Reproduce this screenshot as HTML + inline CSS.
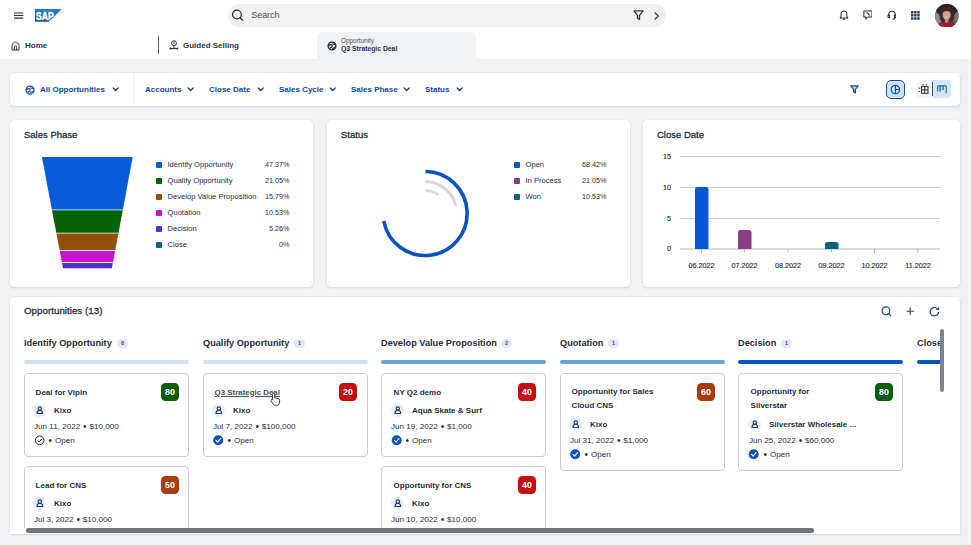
<!DOCTYPE html>
<html lang="en">
<head>
<meta charset="utf-8">
<title>Opportunities</title>
<style>
*{box-sizing:border-box;margin:0;padding:0}
html,body{width:971px;height:545px;overflow:hidden}
body{background:#f0f2f4;font-family:"Liberation Sans",sans-serif;color:#1d2d3e;position:relative}
.abs{position:absolute}
.t{position:absolute;white-space:nowrap;line-height:1}
#topbar{left:0;top:0;width:971px;height:59px;background:#fff}
#search{left:228px;top:4.200px;width:438px;height:22.500px;border-radius:11px;background:#eff1f3}
#tab{left:317px;top:32px;width:158.500px;height:27px;background:#f0f2f4;border-radius:5px 5px 0 0}
.card{position:absolute;background:#fff;border-radius:4.500px;box-shadow:0 0 1.500px rgba(60,70,90,.10),0 1px 2.500px rgba(60,70,90,.14)}
.b{font-weight:bold}
.flt{font-size:8px;font-weight:bold;color:#0e4a96;top:85.5px}
.leg{font-size:7.6px;color:#1d2d3e;margin-top:1px;margin-left:.5px}
.num{font-size:7.200px;margin-top:1.200px}
.sq{margin-top:.9px;position:absolute;width:6px;height:6px;border-radius:1px}
.col{font-size:9.2px;font-weight:bold;color:#1d2d3e;top:339.200px}
.cnt{position:absolute;top:338.800px;height:9.200px;min-width:11px;border-radius:4.600px;background:#e1e8f3;color:#33507a;font-size:5.5px;font-weight:bold;text-align:center;line-height:9.200px}
.bar{position:absolute;top:360px;height:4px;width:165px;border-radius:2px}
.kc{position:absolute;background:#fff;border:1px solid #c9ccd0;border-radius:4px;width:165px}
.kt{margin-top:.5px;margin-left:-.4px;font-size:8px;font-weight:bold;color:#1d2d3e}
.kn{margin-top:.8px;font-size:8px;font-weight:bold;color:#1d2d3e}
.kd{margin-top:.6px;font-size:8.1px;color:#1d2d3e}
.bl{font-size:10px;line-height:0;position:relative;top:1.500px;margin:0 .6px}
.badge{position:absolute;width:18px;height:18px;border-radius:4.500px;color:#fff;font-size:8.800px;font-weight:bold;text-align:center;line-height:18px}
.av{position:absolute;width:13px;height:13px;border-radius:50%;background:#e8ecf5;margin:.8px 0 0 -.8px}
</style>
</head>
<body>
<div class="abs" style="left:960.500px;top:59px;width:7px;height:486px;background:#edeff1"></div><div class="abs" style="left:967.500px;top:59px;width:3.500px;height:486px;background:#f3f4f6"></div>
<div id="topbar" class="abs"></div>
<div id="search" class="abs"></div>
<div id="tab" class="abs"></div>

<!-- hamburger -->
<svg class="abs" style="left:13.700px;top:12px" width="10" height="8" viewBox="0 0 10 8"><path d="M0 .9h9.300M0 3.500h9.300M0 6.100h9.300" stroke="#2a2f35" stroke-width="1.050" fill="none"/></svg>
<!-- SAP logo -->
<svg class="abs" style="left:35px;top:9px" width="27" height="13" viewBox="0 0 27 13"><defs><linearGradient id="sapg" x1="0" y1="0" x2="0" y2="1"><stop offset="0" stop-color="#1b84c8"/><stop offset="1" stop-color="#0a4a8e"/></linearGradient></defs><path d="M0 0h26.800L13.800 12.800H0z" fill="url(#sapg)"/><text x="1.100" y="10.600" font-family="Liberation Sans, sans-serif" font-weight="bold" font-size="10.100" fill="#fff" stroke="#fff" stroke-width=".5" textLength="17.600" lengthAdjust="spacingAndGlyphs">SAP</text></svg>

<!-- search icon/text -->
<svg class="abs" style="left:231px;top:9.300px" width="13" height="13" viewBox="0 0 13 13"><circle cx="5.900" cy="5.500" r="4.400" stroke="#2b3440" stroke-width="1.250" fill="none"/><path d="M9.100 8.700l2.600 2.600" stroke="#2b3440" stroke-width="1.300" stroke-linecap="round"/></svg>
<div class="t" style="left:251.300px;top:10.800px;font-size:8.900px;color:#464f5c">Search</div>
<svg class="abs" style="left:633px;top:10px" width="11" height="11" viewBox="0 0 11 11"><path d="M1 0.900h9L6.500 5.400v4L4.500 8.200V5.400z" stroke="#2f3843" stroke-width="1.300" fill="none" stroke-linejoin="round"/></svg>
<svg class="abs" style="left:654px;top:11.500px" width="6" height="8" viewBox="0 0 6 8"><path d="M1.200 1l3.100 3L1.200 7" stroke="#3a434e" stroke-width="1.300" fill="none" stroke-linecap="round" stroke-linejoin="round"/></svg>

<!-- right icons -->
<svg class="abs" style="left:838.700px;top:10.300px" width="9.900" height="10.800" viewBox="0 0 11 12"><path d="M5.500 1.200c-2 0-3.200 1.500-3.200 3.300v2.600L1.200 8.800h8.600L8.700 7.100V4.500c0-1.800-1.200-3.300-3.200-3.300zM4.600 10.200h1.800" stroke="#2a2f36" stroke-width="1.150" fill="none" stroke-linejoin="round" stroke-linecap="round"/></svg>
<svg class="abs" style="left:862.600px;top:10.300px" width="9.900" height="9.900" viewBox="0 0 11 11"><path d="M1 1h9v6.800H5.300L3.200 10V7.800H1z" stroke="#2a2f36" stroke-width="1.150" fill="none" stroke-linejoin="round"/><path d="M3.800 2.800l2 1 .6 1.600 1.400.4" stroke="#2a2f36" stroke-width="1.200" fill="none"/></svg>
<svg class="abs" style="left:886.600px;top:10.300px" width="9.900" height="9.900" viewBox="0 0 11 11"><path d="M1.800 6.500V5a3.700 3.700 0 0 1 7.400 0v1.500M1.200 5.600h1.600v2.800H1.200zM8.200 5.600h1.600v2.800H8.200zM9 8.400c0 1.200-1 1.800-2.600 1.800" stroke="#2a2f36" stroke-width="1.150" fill="none" stroke-linejoin="round"/></svg>
<svg class="abs" style="left:911.400px;top:11px" width="9" height="9" viewBox="0 0 9 9" fill="#2b425c"><rect x="0" y="0" width="2.500" height="2.500" rx=".3"/><rect x="3.100" y="0" width="2.500" height="2.500" rx=".3"/><rect x="6.200" y="0" width="2.500" height="2.500" rx=".3"/><rect x="0" y="3.100" width="2.500" height="2.500" rx=".3"/><rect x="3.100" y="3.100" width="2.500" height="2.500" rx=".3"/><rect x="6.200" y="3.100" width="2.500" height="2.500" rx=".3"/><rect x="0" y="6.200" width="2.500" height="2.500" rx=".3"/><rect x="3.100" y="6.200" width="2.500" height="2.500" rx=".3"/><rect x="6.200" y="6.200" width="2.500" height="2.500" rx=".3"/></svg>
<!-- avatar -->
<svg class="abs" style="left:935px;top:3.700px" width="23.700" height="23.700" viewBox="0 0 24 24"><defs><clipPath id="avc"><circle cx="12" cy="12" r="12"/></clipPath></defs><g clip-path="url(#avc)"><rect width="24" height="24" fill="#5b5751"/><ellipse cx="2.500" cy="14.500" rx="4.500" ry="5.500" fill="#8d8f86"/><ellipse cx="22" cy="12.500" rx="3.500" ry="5" fill="#767870"/><ellipse cx="12" cy="5" rx="11" ry="7.500" fill="#2d2120"/><ellipse cx="12" cy="11.500" rx="7.600" ry="8.800" fill="#3d2826"/><path d="M2.500 24c.4-4.500 3.800-6.300 9.300-6.300s9.300 1.800 9.700 6.300z" fill="#9c1c2b"/><path d="M9.800 15h4l-.3 3.200c-1.100.9-2.300.9-3.400 0z" fill="#c08e78"/><ellipse cx="11.800" cy="10.800" rx="4.100" ry="5.200" fill="#d2a28b"/><path d="M9.900 12.500c1.200 1 2.600 1 3.800 0-.5 1.600-3.300 1.600-3.800 0z" fill="#f5ecea"/><path d="M7.500 9.500c.3-3 2-4.600 4.300-4.600s4 1.600 4.300 4.600c-1.300-1.700-2.600-2.400-4.300-2.400s-3 .7-4.300 2.400z" fill="#3d2826"/></g></svg>

<!-- tabs row -->
<svg class="abs" style="left:10.600px;top:40.600px" width="9" height="10" viewBox="0 0 9 10"><path d="M1 9V4.300C1 2.800 3.300 1 4.500 1S8 2.800 8 4.300V9z" stroke="#2a2f35" stroke-width="1" fill="none" stroke-linejoin="round"/><path d="M3.300 9V6.200a1.200 1.200 0 0 1 2.400 0V9" stroke="#2a2f35" stroke-width="1" fill="none"/></svg>
<div class="t b" style="left:25px;top:41.8px;font-size:8px;color:#2d3640">Home</div>
<div class="abs" style="left:158px;top:36px;width:1px;height:18px;background:#59616b"></div>
<svg class="abs" style="left:168.500px;top:40px" width="10" height="10" viewBox="0 0 10 10"><circle cx="5" cy="3.200" r="2.400" stroke="#2a2f35" stroke-width="1" fill="none"/><path d="M5 2v2.400M5 5.600v2.600" stroke="#2a2f35" stroke-width=".9" fill="none"/><path d="M1 8.500h8" stroke="#2a2f35" stroke-width="1.200"/><circle cx="1.200" cy="8.500" r=".9" fill="#2a2f35"/><path d="M8 7.300l1.700 1.200L8 9.700z" fill="#2a2f35"/></svg>
<div class="t b" style="left:183px;top:41.8px;font-size:8px;color:#2d3640">Guided Selling</div>
<svg class="abs" style="left:326.500px;top:40.500px" width="10" height="10" viewBox="0 0 10 10"><circle cx="5" cy="5" r="3.900" stroke="#1f252c" stroke-width="1.300" fill="none"/><path d="M1.800 4.800c1.200-1.600 3.200-1.400 3.400 0s-1.400 1.800-2.600 2.600M5.400 2.600c1 .8 2.200 1 3.200.5M5.200 7.300c1.200.2 2.400-.2 3.200-1.400" stroke="#1f252c" stroke-width="1.200" fill="none"/></svg>
<div class="t" style="left:341px;top:38px;font-size:6.400px;color:#4a5564">Opportunity</div>
<div class="t b" style="left:341px;top:46.200px;font-size:6.800px;color:#2a333e">Q3 Strategic Deal</div>

<!-- filter bar -->
<div class="card" style="left:10px;top:73px;width:950px;height:32.5px"></div>
<div class="abs" style="left:133px;top:73px;width:1px;height:32.5px;background:#eef0f3"></div>
<svg class="abs" style="left:25px;top:84.500px" width="10" height="10" viewBox="0 0 10 10"><circle cx="5" cy="5" r="4" stroke="#0e4a96" stroke-width="1.250" fill="none"/><path d="M1.800 4.800c1.200-1.600 3.200-1.400 3.400 0s-1.400 1.800-2.600 2.600M5.400 2.600c1 .8 2.200 1 3.200.5M5.200 7.300c1.200.2 2.400-.2 3.200-1.400" stroke="#0e4a96" stroke-width="1.150" fill="none"/></svg>
<div class="t flt" style="left:40px">All Opportunities</div>
<div class="t flt" style="left:145px">Accounts</div>
<div class="t flt" style="left:209px">Close Date</div>
<div class="t flt" style="left:279px">Sales Cycle</div>
<div class="t flt" style="left:351px">Sales Phase</div>
<div class="t flt" style="left:425px">Status</div>
<svg class="abs" style="left:0;top:0" width="971" height="110" viewBox="0 0 971 110" fill="none" stroke="#1c3d68" stroke-width="1.250" stroke-linecap="round" stroke-linejoin="round"><path d="M113.2 88l2.500 2.500 2.500-2.500M188.2 88l2.500 2.500 2.500-2.500M258.2 88l2.500 2.500 2.500-2.500M330.2 88l2.500 2.500 2.500-2.500M404.2 88l2.500 2.500 2.500-2.500M457.2 88l2.500 2.500 2.500-2.500"/></svg>
<svg class="abs" style="left:849.600px;top:84.500px" width="9" height="9" viewBox="0 0 9 9"><path d="M0.800 0.900h7.300L5.400 4.500v3.600L3.600 7V4.500z" stroke="#0e4a96" stroke-width="1.200" fill="#c4d4ee" stroke-linejoin="round"/></svg>
<div class="abs" style="left:886.300px;top:80px;width:18.500px;height:18.500px;border-radius:5px;background:#c9e4f9;border:1px solid #2a5070"></div>
<svg class="abs" style="left:890.200px;top:84px" width="11" height="11" viewBox="0 0 11 11"><circle cx="5.400" cy="5.500" r="4.200" stroke="#0e4a96" stroke-width="1.150" fill="none"/><path d="M5.400 1.300v4.200h4.200M5.400 5.500v4.200" stroke="#0e4a96" stroke-width="1.100" fill="none"/></svg>
<div class="abs" style="left:916px;top:80px;width:35px;height:18px;border-radius:4px;background:#f3f5f7"></div>
<div class="abs" style="left:932.500px;top:80px;width:18.500px;height:18px;border-radius:0 4px 4px 0;background:#d1e6f8"></div>
<div class="abs" style="left:932.300px;top:81.500px;width:.8px;height:14.500px;background:#34506c"></div>
<svg class="abs" style="left:917.500px;top:84px" width="11" height="10" viewBox="0 0 11 10" fill="none" stroke="#3a4450" stroke-width="1.100"><rect x="3.500" y="2.500" width="6.500" height="6.800"/><path d="M3.500 5.900h6.500M6.750 2.500v6.800"/><path d="M0.500 4.200h1.600M0.500 7.500h1.600M4.300 .8h1.700M7.500 .8h1.700" stroke-width="1"/></svg>
<svg class="abs" style="left:936.500px;top:84.500px" width="10" height="9" viewBox="0 0 10 9" fill="none" stroke="#17599c" stroke-width="1" stroke-linejoin="round"><path d="M0.700 6.500V0.800H3.200V6.500M3.200 0.800H6V5M6 0.800H9.200V8.300"/><path d="M2.900 6.500V1M6.300 5V1" stroke-width=".6"/></svg>

<!-- chart cards -->
<div class="card" style="left:10px;top:119.5px;width:303px;height:167px"></div>
<div class="card" style="left:327px;top:119.5px;width:303px;height:167px"></div>
<div class="card" style="left:643px;top:119.5px;width:317px;height:167px"></div>
<div class="t" style="left:24px;top:130px;font-size:9.500px;color:#1d2d3e;-webkit-text-stroke:.3px #1d2d3e;margin-top:-.4px">Sales Phase</div>
<div class="t" style="left:341px;top:130px;font-size:9.500px;color:#1d2d3e;-webkit-text-stroke:.3px #1d2d3e;margin-top:-.4px">Status</div>
<div class="t" style="left:657px;top:130px;font-size:9.500px;color:#1d2d3e;-webkit-text-stroke:.3px #1d2d3e;margin-top:-.4px">Close Date</div>

<!-- funnel -->
<svg class="abs" style="left:0;top:110px" width="330" height="185" viewBox="0 110 330 185">
<path d="M41.90 156.90L132.70 156.90L122.90 209.40L51.84 209.40z" fill="#075bd8"/>
<path d="M52.00 210.20L122.75 210.20L118.55 232.70L56.26 232.70z" fill="#056307"/>
<path d="M56.41 233.50L118.40 233.50L115.30 250.10L59.55 250.10z" fill="#935009"/>
<path d="M59.70 250.90L115.15 250.90L113.06 262.10L61.82 262.10z" fill="#cb0fd0"/>
<path d="M61.98 262.90L112.91 262.90L111.90 268.30L63.00 268.30z" fill="#4b35c8"/>
</svg>
<div class="sq" style="left:156px;top:161px;background:#075bd8"></div>
<div class="sq" style="left:156px;top:177px;background:#056307"></div>
<div class="sq" style="left:156px;top:193px;background:#935009"></div>
<div class="sq" style="left:156px;top:209px;background:#cb0fd0"></div>
<div class="sq" style="left:156px;top:225px;background:#4b35c8"></div>
<div class="sq" style="left:156px;top:241px;background:#0c6478"></div>
<div class="t leg" style="left:167px;top:160px">Identify Opportunity</div>
<div class="t leg" style="left:167px;top:176px">Qualify Opportunity</div>
<div class="t leg" style="left:167px;top:192px">Develop Value Proposition</div>
<div class="t leg" style="left:167px;top:208px">Quotation</div>
<div class="t leg" style="left:167px;top:224px">Decision</div>
<div class="t leg" style="left:167px;top:240px">Close</div>
<div class="t leg num" style="right:681.500px;top:160px">47.37%</div>
<div class="t leg num" style="right:681.500px;top:176px">21.05%</div>
<div class="t leg num" style="right:681.500px;top:192px">15.79%</div>
<div class="t leg num" style="right:681.500px;top:208px">10.53%</div>
<div class="t leg num" style="right:681.500px;top:224px">5.26%</div>
<div class="t leg num" style="right:681.500px;top:240px">0%</div>

<!-- status donut -->
<svg class="abs" style="left:320px;top:110px" width="330" height="185" viewBox="320 110 330 185" fill="none">
<path d="M425.500 171.500A42 42 0 1 1 383.800 221" stroke="#0a53bf" stroke-width="3.600"/>
<path d="M425.500 181.500A32 32 0 0 1 456 206" stroke="#ddd3d8" stroke-width="3"/>
<path d="M425.500 190.500A23 23 0 0 1 438.500 194.800" stroke="#d6dde1" stroke-width="3"/>
</svg>
<div class="sq" style="left:514px;top:161px;background:#0a55c4"></div>
<div class="sq" style="left:514px;top:177px;background:#89407f"></div>
<div class="sq" style="left:514px;top:193px;background:#0c6478"></div>
<div class="t leg" style="left:525px;top:160px">Open</div>
<div class="t leg" style="left:525px;top:176px">In Process</div>
<div class="t leg" style="left:525px;top:192px">Won</div>
<div class="t leg num" style="right:364.500px;top:160px">68.42%</div>
<div class="t leg num" style="right:364.500px;top:176px">21.05%</div>
<div class="t leg num" style="right:364.500px;top:192px">10.53%</div>

<!-- close date chart -->
<svg class="abs" style="left:640px;top:110px" width="331" height="185" viewBox="640 110 331 185">
<g stroke="#c9cbce" stroke-width="1"><path d="M680 156.500h260M680 187.500h260M680 218.500h260"/></g>
<path d="M680 249h260" stroke="#aeb2b6" stroke-width="1"/>
<g stroke="#aeb2b6" stroke-width="1"><path d="M701.500 249.500v3M744.500 249.500v3M788 249.500v3M831.500 249.500v3M874.500 249.500v3M918 249.500v3"/></g>
<path d="M695 249v-59.500a2.500 2.500 0 0 1 2.500-2.500h8.500a2.500 2.500 0 0 1 2.500 2.500v59.500z" fill="#0758d6"/>
<path d="M738 249v-16.500a2.500 2.500 0 0 1 2.500-2.500h8.500a2.500 2.500 0 0 1 2.500 2.500v16.500z" fill="#8a3c84"/>
<path d="M825 249v-4.500a2.500 2.500 0 0 1 2.500-2.500h8.500a2.500 2.500 0 0 1 2.500 2.500v4.500z" fill="#0c6478"/>
<g font-family="Liberation Sans, sans-serif" font-size="7.200" fill="#1d2d3e" stroke="#1d2d3e" stroke-width=".15">
<text text-anchor="end" x="671" y="159">15</text>
<text text-anchor="end" x="671" y="190">10</text>
<text text-anchor="end" x="671" y="221">5</text>
<text text-anchor="end" x="671" y="251">0</text>
<g text-anchor="middle">
<text x="701.500" y="267.500">06.2022</text><text x="744.500" y="267.500">07.2022</text><text x="788" y="267.500">08.2022</text><text x="831.500" y="267.500">09.2022</text><text x="874.500" y="267.500">10.2022</text><text x="918" y="267.500">11.2022</text>
</g></g>
</svg>

<!-- opportunities panel -->
<div class="card" style="left:10px;top:296.5px;width:950px;height:237.5px;border-radius:4.500px 4.500px 0 0"></div>
<div class="t" style="left:24px;top:306px;font-size:9.800px;color:#273341;-webkit-text-stroke:.3px #273341">Opportunities (13)</div>
<svg class="abs" style="left:880.500px;top:306px" width="11" height="11" viewBox="0 0 11 11"><circle cx="4.900" cy="4.800" r="3.900" stroke="#1f4a7e" stroke-width="1.200" fill="none"/><path d="M7.700 7.600l2 2" stroke="#1f4a7e" stroke-width="1.300" stroke-linecap="round"/></svg>
<svg class="abs" style="left:905.600px;top:307.300px" width="9" height="9" viewBox="0 0 9 9"><path d="M4.200 0.400v7.600M0.400 4.200h7.600" stroke="#1f4a7e" stroke-width="1.150"/></svg>
<svg class="abs" style="left:928.500px;top:306px" width="11" height="11" viewBox="0 0 11 11"><path d="M9.600 5.700a4.200 4.200 0 1 1-1.500-3.200" stroke="#1f4a7e" stroke-width="1.200" fill="none"/><path d="M10.200 0.700v3.300H6.900z" fill="#1f4a7e"/></svg>

<div id="kan" class="abs" style="left:10px;top:296px;width:930px;height:231.500px;overflow:hidden">
<div class="abs" style="left:-10px;top:-296px;width:971px;height:545px">

<div class="t col" style="left:24px">Identify Opportunity</div><div class="cnt" style="left:117px">8</div>
<div class="t col" style="left:203px">Qualify Opportunity</div><div class="cnt" style="left:294px">1</div>
<div class="t col" style="left:381px">Develop Value Proposition</div><div class="cnt" style="left:501px">2</div>
<div class="t col" style="left:560px">Quotation</div><div class="cnt" style="left:608px">1</div>
<div class="t col" style="left:738px">Decision</div><div class="cnt" style="left:781px">1</div>
<div class="t col" style="left:917px">Close</div>

<div class="bar" style="left:24px;background:#cfe3f1"></div>
<div class="bar" style="left:203px;background:#cfe3f1"></div>
<div class="bar" style="left:381px;background:#62a3d9"></div>
<div class="bar" style="left:560px;background:#62a3d9"></div>
<div class="bar" style="left:738px;background:#0a55c4"></div>
<div class="bar" style="left:917px;background:#0a55c4"></div>

<!-- col 1 -->
<div class="kc" style="left:24px;top:373px;height:84px"></div>
<div class="t kt" style="left:36px;top:388px">Deal for Vipin</div>
<div class="badge" style="left:161px;top:383px;background:#0b5e0c">80</div>
<div class="av" style="left:34px;top:403px"></div>
<div class="t kn" style="left:54px;top:406px">Kixo</div>
<div class="t kd" style="left:34px;top:422px">Jun 11, 2022 <span class="bl">•</span> $10,000</div>
<div class="t kd" style="left:48px;top:436px"><span class="bl">•</span> Open</div>

<div class="kc" style="left:24px;top:466px;height:84px"></div>
<div class="t kt" style="left:36px;top:481px">Lead for CNS</div>
<div class="badge" style="left:161px;top:476px;background:#a73c0c">50</div>
<div class="av" style="left:34px;top:496px"></div>
<div class="t kn" style="left:54px;top:499px">Kixo</div>
<div class="t kd" style="left:34px;top:515px">Jul 3, 2022 <span class="bl">•</span> $10,000</div>

<!-- col 2 -->
<div class="kc" style="left:203px;top:373px;height:84px"></div>
<div class="t kt" style="left:215px;top:388px;text-decoration:underline;text-decoration-thickness:.7px;color:#434f64;font-size:7.900px">Q3 Strategic Deal</div>
<div class="badge" style="left:339px;top:383px;background:#c60f10">20</div>
<div class="av" style="left:213px;top:403px"></div>
<div class="t kn" style="left:233px;top:406px">Kixo</div>
<div class="t kd" style="left:213px;top:422px">Jul 7, 2022 <span class="bl">•</span> $100,000</div>
<div class="t kd" style="left:227px;top:436px"><span class="bl">•</span> Open</div>

<!-- col 3 -->
<div class="kc" style="left:381px;top:373px;height:84px"></div>
<div class="t kt" style="left:394px;top:388px">NY Q2 demo</div>
<div class="badge" style="left:518px;top:383px;background:#c60f10">40</div>
<div class="av" style="left:392px;top:403px"></div>
<div class="t kn" style="left:412px;top:406px">Aqua Skate &amp; Surf</div>
<div class="t kd" style="left:391px;top:422px">Jun 19, 2022 <span class="bl">•</span> $1,000</div>
<div class="t kd" style="left:405px;top:436px"><span class="bl">•</span> Open</div>

<div class="kc" style="left:381px;top:466px;height:84px"></div>
<div class="t kt" style="left:394px;top:481px">Opportunity for CNS</div>
<div class="badge" style="left:518px;top:476px;background:#c60f10">40</div>
<div class="av" style="left:392px;top:496px"></div>
<div class="t kn" style="left:412px;top:499px">Kixo</div>
<div class="t kd" style="left:391px;top:515px">Jun 10, 2022 <span class="bl">•</span> $10,000</div>

<!-- col 4 -->
<div class="kc" style="left:560px;top:373px;height:98px"></div>
<div class="t kt" style="left:572px;top:387.400px">Opportunity for Sales</div>
<div class="t kt" style="left:572px;top:401.200px">Cloud CNS</div>
<div class="badge" style="left:697px;top:383px;background:#a73c0c">60</div>
<div class="av" style="left:570px;top:417px"></div>
<div class="t kn" style="left:590px;top:420px">Kixo</div>
<div class="t kd" style="left:570px;top:436px">Jul 31, 2022 <span class="bl">•</span> $1,000</div>
<div class="t kd" style="left:584px;top:450px"><span class="bl">•</span> Open</div>

<!-- col 5 -->
<div class="kc" style="left:738px;top:373px;height:98px"></div>
<div class="t kt" style="left:751px;top:387.400px">Opportunity for</div>
<div class="t kt" style="left:751px;top:401.200px">Silverstar</div>
<div class="badge" style="left:875px;top:383px;background:#0b5e0c">80</div>
<div class="av" style="left:749px;top:417px"></div>
<div class="t kn" style="left:769px;top:420px">Silverstar Wholesale ...</div>
<div class="t kd" style="left:749px;top:436px">Jun 25, 2022 <span class="bl">•</span> $60,000</div>
<div class="t kd" style="left:763px;top:450px"><span class="bl">•</span> Open</div>

<!-- person icons & status icons -->
<svg class="abs" style="left:0;top:0" width="971" height="545" viewBox="0 0 971 545" fill="none">
<defs>
<g id="per" stroke="#233f73" stroke-width="1.150" fill="none" transform="translate(-.7 .8)"><circle cx="0" cy="-1.700" r="1.700"/><path d="M-2.800 3.200c0-2.400 1.100-3.200 2.800-3.200s2.800.8 2.800 3.200z" stroke-linejoin="round"/></g>
<g id="chk" transform="translate(.2 .8)"><circle cx="0" cy="0" r="5" fill="#0a52bd"/><path d="M-2.200 .1l1.600 1.700 2.900-3.400" stroke="#fff" stroke-width="1.100" fill="none" stroke-linecap="round" stroke-linejoin="round"/></g>
<g id="chko" transform="translate(.2 .8)"><circle cx="0" cy="0" r="4.300" stroke="#1d2d3e" stroke-width="1" fill="none"/><path d="M-2 .1l1.500 1.600 2.600-3.100" stroke="#1d2d3e" stroke-width="1" fill="none" stroke-linecap="round" stroke-linejoin="round"/></g>
</defs>
<use href="#per" x="40.500" y="409.500"/><use href="#per" x="40.500" y="502.500"/>
<use href="#per" x="219.500" y="409.500"/>
<use href="#per" x="398.500" y="409.500"/><use href="#per" x="398.500" y="502.500"/>
<use href="#per" x="576.500" y="423.500"/>
<use href="#per" x="755.500" y="423.500"/>
<use href="#chko" x="39.500" y="439.500"/>
<use href="#chk" x="218" y="439.500"/>
<use href="#chk" x="396.500" y="439.500"/>
<use href="#chk" x="575" y="453.500"/>
<use href="#chk" x="753.500" y="453.500"/>
</svg>
</div>
</div>

<!-- cursor -->
<svg class="abs" style="left:270px;top:392px" width="11" height="15" viewBox="0 0 11 15"><path d="M3.500 1.200c.8 0 1.200.5 1.200 1.200v3.400l3.800.8c.9.200 1.300.8 1.200 1.700l-.5 3.500c-.1.800-.7 1.400-1.500 1.400H4.600c-.6 0-1-.3-1.300-.8L1 8.800c-.3-.6 0-1.200.5-1.400.5-.2.800 0 1.100.3l-.3-5.300c0-.7.500-1.200 1.200-1.200z" fill="#fff" stroke="#1d2d3e" stroke-width=".9"/></svg>

<!-- scrollbars -->
<div class="abs" style="left:939.600px;top:329px;width:4.700px;height:62.500px;border-radius:2.500px;background:#7c858e"></div>
<div class="abs" style="left:25.700px;top:528.300px;width:788px;height:4.300px;border-radius:2.200px;background:#70767d"></div>
</body>
</html>
